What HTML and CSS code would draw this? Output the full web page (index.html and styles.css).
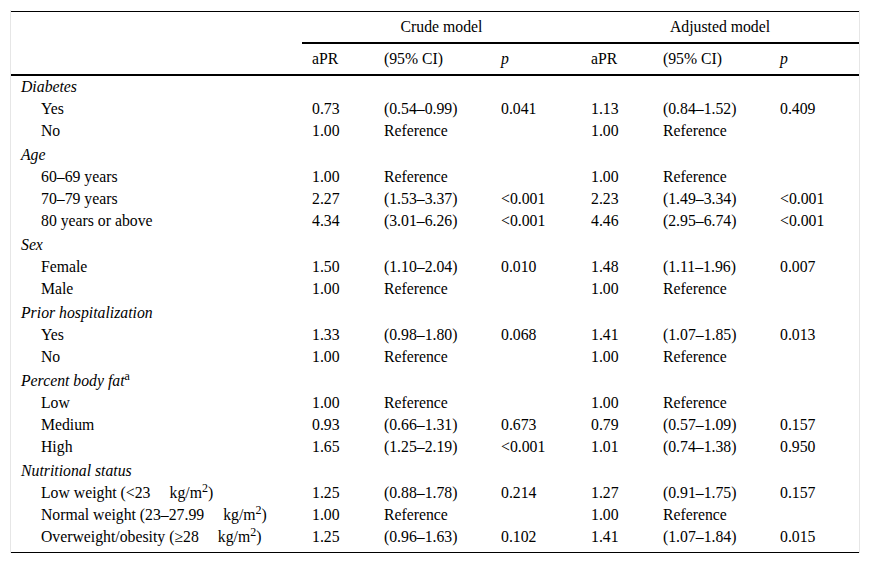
FILE: index.html
```html
<!DOCTYPE html>
<html>
<head>
<meta charset="utf-8">
<link rel="stylesheet" href="styles.css">
</head>
<body>
<div class="wrap">
<table class="tbl">
<colgroup>
<col class="c-label"><col class="c-apr"><col class="c-ci"><col class="c-p"><col class="c-apr"><col class="c-ci"><col class="c-p2">
</colgroup>
<thead>
<tr class="grp">
<th rowspan="2" class="blank"></th>
<th colspan="3" class="group">Crude model</th>
<th colspan="3" class="group">Adjusted model</th>
</tr>
<tr class="sub">
<th>aPR</th><th>(95% CI)</th><th><i>p</i></th>
<th>aPR</th><th>(95% CI)</th><th><i>p</i></th>
</tr>
</thead>
<tbody>
<tr class="cat first"><td colspan="7"><i>Diabetes</i></td></tr>
<tr><td class="item">Yes</td><td>0.73</td><td>(0.54–0.99)</td><td>0.041</td><td>1.13</td><td>(0.84–1.52)</td><td>0.409</td></tr>
<tr><td class="item">No</td><td>1.00</td><td>Reference</td><td></td><td>1.00</td><td>Reference</td><td></td></tr>
<tr class="cat"><td colspan="7"><i>Age</i></td></tr>
<tr><td class="item">60–69 years</td><td>1.00</td><td>Reference</td><td></td><td>1.00</td><td>Reference</td><td></td></tr>
<tr><td class="item">70–79 years</td><td>2.27</td><td>(1.53–3.37)</td><td>&lt;0.001</td><td>2.23</td><td>(1.49–3.34)</td><td>&lt;0.001</td></tr>
<tr><td class="item">80 years or above</td><td>4.34</td><td>(3.01–6.26)</td><td>&lt;0.001</td><td>4.46</td><td>(2.95–6.74)</td><td>&lt;0.001</td></tr>
<tr class="cat"><td colspan="7"><i>Sex</i></td></tr>
<tr><td class="item">Female</td><td>1.50</td><td>(1.10–2.04)</td><td>0.010</td><td>1.48</td><td>(1.11–1.96)</td><td>0.007</td></tr>
<tr><td class="item">Male</td><td>1.00</td><td>Reference</td><td></td><td>1.00</td><td>Reference</td><td></td></tr>
<tr class="cat"><td colspan="7"><i>Prior hospitalization</i></td></tr>
<tr><td class="item">Yes</td><td>1.33</td><td>(0.98–1.80)</td><td>0.068</td><td>1.41</td><td>(1.07–1.85)</td><td>0.013</td></tr>
<tr><td class="item">No</td><td>1.00</td><td>Reference</td><td></td><td>1.00</td><td>Reference</td><td></td></tr>
<tr class="cat"><td colspan="7"><i>Percent body fat</i><sup>a</sup></td></tr>
<tr><td class="item">Low</td><td>1.00</td><td>Reference</td><td></td><td>1.00</td><td>Reference</td><td></td></tr>
<tr><td class="item">Medium</td><td>0.93</td><td>(0.66–1.31)</td><td>0.673</td><td>0.79</td><td>(0.57–1.09)</td><td>0.157</td></tr>
<tr><td class="item">High</td><td>1.65</td><td>(1.25–2.19)</td><td>&lt;0.001</td><td>1.01</td><td>(0.74–1.38)</td><td>0.950</td></tr>
<tr class="cat"><td colspan="7"><i>Nutritional status</i></td></tr>
<tr><td class="item">Low weight (&lt;23<span class="gap"></span>kg/m<sup>2</sup>)</td><td>1.25</td><td>(0.88–1.78)</td><td>0.214</td><td>1.27</td><td>(0.91–1.75)</td><td>0.157</td></tr>
<tr><td class="item">Normal weight (23–27.99<span class="gap"></span>kg/m<sup>2</sup>)</td><td>1.00</td><td>Reference</td><td></td><td>1.00</td><td>Reference</td><td></td></tr>
<tr class="last"><td class="item">Overweight/obesity (≥28<span class="gap"></span>kg/m<sup>2</sup>)</td><td>1.25</td><td>(0.96–1.63)</td><td>0.102</td><td>1.41</td><td>(1.07–1.84)</td><td>0.015</td></tr>
</tbody>
</table>
</div>
</body>
</html>
```

FILE: styles.css
```css
html, body {
  margin: 0;
  padding: 0;
  background: #ffffff;
}
body {
  font-family: "Liberation Serif", "Times New Roman", serif;
  font-size: 15.75px;
  color: #000;
}
.wrap {
  margin: 10px 10px 0 10px;
  padding-top: 1px;
  border-left: 1px solid #e6e6e6;
  border-right: 1px solid #e6e6e6;
  width: 850px;
  box-sizing: border-box;
}
.tbl {
  width: 848px;
  table-layout: fixed;
  border-collapse: separate;
  border-spacing: 0;
  border-top: 1px solid #000;
  border-bottom: 1px solid #000;
}
.c-label { width: 291px; }
.c-apr { width: 72px; }
.c-ci { width: 117px; }
.c-p { width: 90px; }
.c-p2 { width: 89px; }
.tbl th, .tbl td {
  padding: 0 0 0 10px;
  font-weight: normal;
  text-align: left;
  vertical-align: middle;
  white-space: nowrap;
  line-height: 22px;
}
.tbl thead th {
  line-height: 30px;
}
.tbl th.blank {
  border-bottom: 2px solid #000;
}
.tbl th.group {
  text-align: center;
  padding: 0;
  border-bottom: 2px solid #000;
}
.tbl tr.sub th {
  border-bottom: 2px solid #000;
}
.tbl tr.cat td {
  padding-top: 2px;
}
.tbl tr.cat.first td {
  padding-top: 0;
}
.tbl td.item {
  padding-left: 30px;
}
.tbl tr.last td {
  padding-bottom: 4px;
}
sup {
  font-size: 12px;
  line-height: 0;
  vertical-align: 6px;
}
.gap {
  display: inline-block;
  width: 19px;
}
```
